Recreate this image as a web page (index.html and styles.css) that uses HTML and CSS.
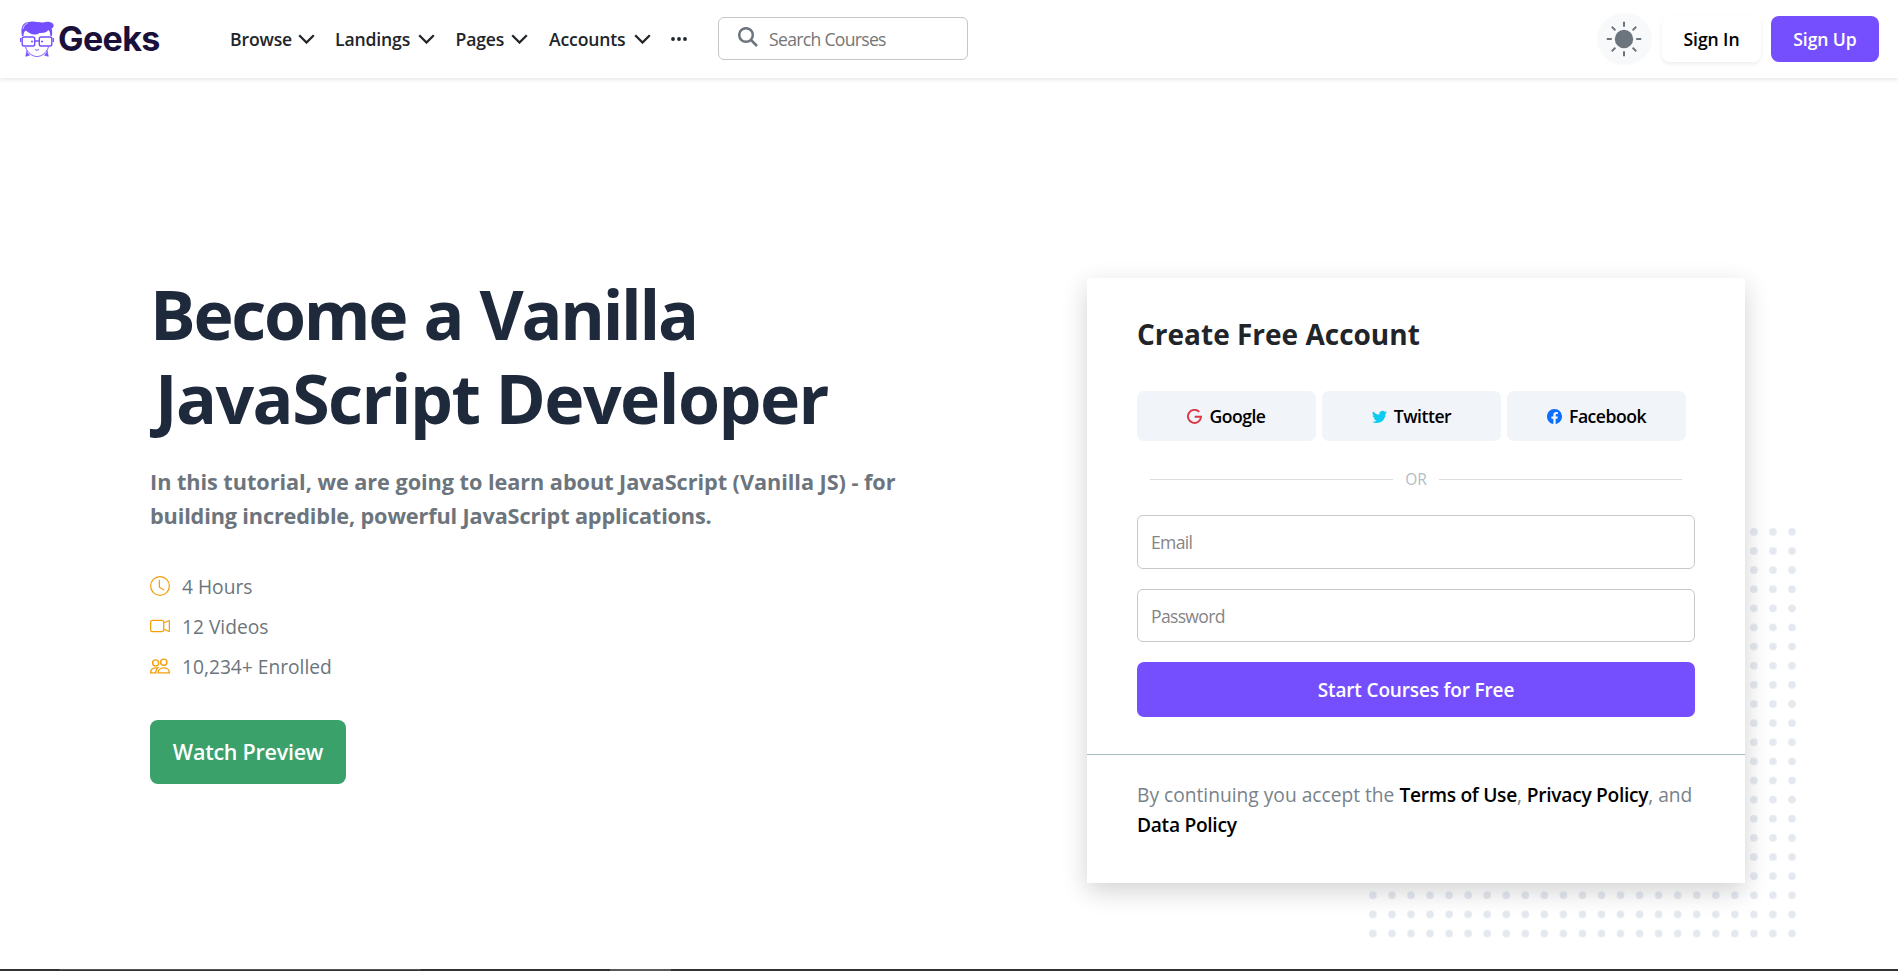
FILE: index.html
```html
<!DOCTYPE html>
<html lang="en">
<head>
<meta charset="utf-8">
<title>Geeks</title>
<link rel="stylesheet" href="styles.css">
</head>
<body>
<header class="navbar">
  <a class="brand">
    <svg class="brand-mark" viewBox="0 0 34 37" fill="none" stroke="#754ffe">
      <path d="M2 15C.5 8 2 1.500 8 1.200c5-1.600 11 .5 15 .2 3-.6 5.500-1 6.500-.4 3 .3 4.500 2 4 4.500-1 2-2 2-2 2 1 2 .8 5 .3 7.500h-1.500c0-3-.5-5-2-6-2 3-6 3-9 3-1 1-3 1.500-5 1.500-3 0-6-2-8.500-4-2 1-2.300 3-2.300 5.500z" fill="#754ffe" stroke="none"/>
      <path d="M3 8c.5-3 2-5 4.500-5.500" stroke="#fff" stroke-width=".7"/>
      <rect x="2.200" y="16" width="12.500" height="9" rx="1.800" stroke-width="1.400"/>
      <rect x="19.300" y="16" width="12.500" height="9" rx="1.800" stroke-width="1.400"/>
      <path d="M14.700 20h4.600M.7 17v4M33.300 17v4M11 20.500h2M21 20.500h2" stroke-width="1.300"/>
      <path d="M5.500 26c2 6 7 9.500 11.500 9.500S26.500 32 28.500 26M15 28.500q2 1.600 4 0" stroke-width=".9"/>
      <path d="M7 29.500v1.800l2.500 3-3.800 1zM27 29.500v1.800l-2.500 3 3.800 1z" fill="#754ffe" stroke-width=".6"/>
    </svg>
    <span class="brand-name">Geeks</span>
  </a>
  <nav class="menu">
    <a class="menu-item browse"><span>Browse</span><svg class="chevron" viewBox="0 0 17 10"><path d="M1.200 1.200 8.500 8.500l7.300-7.300"/></svg></a>
    <a class="menu-item landings"><span>Landings</span><svg class="chevron" viewBox="0 0 17 10"><path d="M1.200 1.200 8.500 8.500l7.300-7.300"/></svg></a>
    <a class="menu-item pages"><span>Pages</span><svg class="chevron" viewBox="0 0 17 10"><path d="M1.200 1.200 8.500 8.500l7.300-7.300"/></svg></a>
    <a class="menu-item accounts"><span>Accounts</span><svg class="chevron" viewBox="0 0 17 10"><path d="M1.200 1.200 8.500 8.500l7.300-7.300"/></svg></a>
    <svg class="more" viewBox="0 0 16 4"><circle cx="2" cy="2" r="1.900"/><circle cx="8" cy="2" r="1.900"/><circle cx="14" cy="2" r="1.900"/></svg>
  </nav>
  <div class="search">
    <svg class="search-icon" viewBox="0 0 20 20"><circle cx="8" cy="8" r="6.800"/><path d="m13 13 6 6"/></svg>
    <span>Search Courses</span>
  </div>
  <div class="actions">
    <span class="theme">
      <svg viewBox="0 0 36 36"><circle cx="18" cy="18" r="8.200"/><path d="M18 .8v5M18 30.200v5M.8 18h5M30.200 18h5M5.800 5.800l3.600 3.600M26.600 26.600l3.600 3.600M5.800 30.200l3.600-3.600M26.600 9.400l3.600-3.600"/></svg>
    </span>
    <a class="btn sign-in"><span>Sign In</span></a>
    <a class="btn sign-up"><span>Sign Up</span></a>
  </div>
</header>
<main class="hero">
  <section class="intro">
    <h1><span class="l1">Become a Vanilla</span><br><span class="l2">JavaScript Developer</span></h1>
    <p class="lead"><span class="p1">In this tutorial, we are going to learn about JavaScript (Vanilla JS) - for</span><br><span class="p2">building incredible, powerful JavaScript applications.</span></p>
    <ul class="facts">
      <li><svg viewBox="0 0 16 16"><path d="M8 3.500a.5.5 0 0 0-1 0V9a.5.5 0 0 0 .252.434l3.500 2a.5.5 0 0 0 .496-.868L8 8.710z"/><path d="M8 16A8 8 0 1 0 8 0a8 8 0 0 0 0 16m7-8A7 7 0 1 1 1 8a7 7 0 0 1 14 0"/></svg><span>4 Hours</span></li>
      <li><svg viewBox="0 0 16 16"><path fill-rule="evenodd" d="M0 5a2 2 0 0 1 2-2h7.500a2 2 0 0 1 1.983 1.738l3.110-1.382A1 1 0 0 1 16 4.269v7.462a1 1 0 0 1-1.406.913l-3.111-1.382A2 2 0 0 1 9.500 13H2a2 2 0 0 1-2-2zm11.500 5.175 3.500 1.556V4.269l-3.500 1.556zM2 4a1 1 0 0 0-1 1v6a1 1 0 0 0 1 1h7.500a1 1 0 0 0 1-1V5a1 1 0 0 0-1-1z"/></svg><span>12 Videos</span></li>
      <li><svg viewBox="0 0 16 16"><g fill="none" stroke="#f59e0b" stroke-width="1.100"><circle cx="11" cy="5" r="2.500"/><circle cx="4.500" cy="5.500" r="2.400"/><path d="M6.500 13.500c0-2 1.500-4 4.500-4s4.500 2 4.500 4zM4.700 13.500H.5c0-2 1.300-4 4.500-4h1.300C5.300 10.500 4.500 12 4.700 13.500z"/></g></svg><span>10,234+ Enrolled</span></li>
    </ul>
    <a class="preview"><span>Watch Preview</span></a>
  </section>
  <section class="signup">
    <svg class="dots" width="427" height="410">
      <defs><pattern id="dot" width="19.050" height="19.130" patternUnits="userSpaceOnUse"><circle cx="3.900" cy="3.900" r="3.800" fill="#e4e9f0"/></pattern></defs>
      <rect width="427" height="410" fill="url(#dot)"/>
    </svg>
    <div class="card">
      <div class="card-body">
        <h2><span>Create Free Account</span></h2>
        <div class="social">
          <a><svg viewBox="0 0 16 16" fill="none" stroke="#dc3545" stroke-width="2"><path d="M13.100 3.100A7 7 0 1 0 15 8.200H8.200"/></svg><span>Google</span></a>
          <a><svg viewBox="0 0 16 16" fill="#0dcaf0"><path d="M5.026 15c6.038 0 9.341-5.003 9.341-9.334 0-.14 0-.282-.006-.422A6.685 6.685 0 0 0 16 3.542a6.658 6.658 0 0 1-1.889.518 3.301 3.301 0 0 0 1.447-1.817 6.533 6.533 0 0 1-2.087.793A3.286 3.286 0 0 0 7.875 6.030a9.325 9.325 0 0 1-6.767-3.429 3.289 3.289 0 0 0 1.018 4.382A3.323 3.323 0 0 1 .64 6.575v.045a3.288 3.288 0 0 0 2.632 3.218 3.203 3.203 0 0 1-.865.115 3.230 3.230 0 0 1-.614-.057 3.283 3.283 0 0 0 3.067 2.277A6.588 6.588 0 0 1 .78 13.580a6.320 6.320 0 0 1-.78-.045A9.344 9.344 0 0 0 5.026 15z"/></svg><span>Twitter</span></a>
          <a><svg viewBox="0 0 16 16" fill="#0d6efd"><path d="M16 8.049c0-4.446-3.582-8.050-8-8.050C3.580 0-.002 3.603-.002 8.050c0 4.017 2.926 7.347 6.750 7.951v-5.625h-2.030V8.050H6.750V6.275c0-2.017 1.195-3.131 3.022-3.131.876 0 1.791.157 1.791.157v1.980h-1.009c-.993 0-1.303.621-1.303 1.258v1.510h2.218l-.354 2.326H9.250V16c3.824-.604 6.750-3.934 6.750-7.951z"/></svg><span>Facebook</span></a>
        </div>
        <div class="or"><span>OR</span></div>
        <div class="field email"><span>Email</span></div>
        <div class="field password"><span>Password</span></div>
        <a class="start"><span>Start Courses for Free</span></a>
      </div>
      <p class="terms"><span>By continuing you accept the </span><b>Terms of Use</b>, <b>Privacy Policy</b><span>, and</span><br><b>Data Policy</b></p>
    </div>
  </section>
</main>
<footer class="edge"><i class="tab"></i><i class="thumb"></i></footer>
</body>
</html>
```
FILE: styles.css
```css
* { box-sizing: border-box; }
body { margin: 0; width: 1898px; height: 971px; overflow: hidden; background: #fff; color: #212529; font-family: "Open Sans", "Noto Sans", sans-serif; font-size: 17.6px; display: flex; flex-direction: column; }
svg { display: block; flex: none; }
span, b { white-space: pre; }
h1, h2, p, ul { margin: 0; padding: 0; }

.navbar { height: 78px; flex: none; display: flex; align-items: center; padding: 0 19px 0 20px; box-shadow: 0 2px 4px rgba(0, 0, 0, .09); }
.brand { display: flex; align-items: center; gap: 4px; width: 210px; }
.brand-mark { width: 34px; height: 37px; }
.brand-name { font: 700 34px/40px Inter, sans-serif; letter-spacing: -.6px; color: #19103b; }
.menu { display: flex; align-items: center; font-weight: 600; letter-spacing: -.150px; width: 488px; }
.menu-item { display: flex; align-items: center; justify-content: space-between; }
.browse { width: 85px; margin-right: 20px; }
.landings { width: 100px; margin-right: 20.500px; }
.pages { width: 72.500px; margin-right: 21px; }
.accounts { width: 102px; margin-right: 20px; }
.chevron { width: 17px; height: 10px; fill: none; stroke: #212529; stroke-width: 2.300; }
.more { width: 16px; height: 4px; fill: #212529; }
.search { width: 250px; height: 43px; margin-top: -1px; border: 1px solid #c4c6c8; border-radius: 6px; display: flex; align-items: center; padding-left: 19px; gap: 11px; color: #757575; letter-spacing: -.7px; }
.search-icon { width: 20px; height: 20px; fill: none; stroke: #6c757d; stroke-width: 2.500; margin-top: -4px; }
.actions { margin-left: auto; display: flex; align-items: center; gap: 10px; font-weight: 600; letter-spacing: -.1px; }
.theme { width: 55px; height: 52px; border-radius: 50%; background: #f8f9fb; display: flex; align-items: center; justify-content: center; }
.theme svg { width: 36px; height: 36px; margin-right: 1px; fill: #6c757d; stroke: #6c757d; stroke-width: 2; }
.btn { height: 46px; border-radius: 8px; display: flex; align-items: center; justify-content: center; }
.sign-in { width: 99px; color: #000; box-shadow: 0 2px 4px rgba(0, 0, 0, .075); }
.sign-up { width: 108px; color: #fff; background: #754ffe; }

.hero { flex: 1; display: flex; padding-left: 150px; }
.intro { width: 937px; padding-top: 194px; }
h1 { font-size: 68px; line-height: 83.500px; font-weight: 700; color: #1e293b; }
.l1 { letter-spacing: -2.300px; word-spacing: 2px; }
.l2 { letter-spacing: -1.550px; padding-left: 5px; }
.lead { margin-top: 26px; font-size: 21.700px; line-height: 34px; font-weight: 700; color: #6c757d; }
.p1 { letter-spacing: -.050px; }
.p2 { letter-spacing: -.150px; }
.facts { list-style: none; margin-top: 33px; font-size: 19.200px; color: #6c757d; }
.facts li { height: 40px; display: flex; align-items: center; gap: 12px; }
.facts svg { width: 20px; height: 20px; fill: #f59e0b; }
.preview { margin-top: 34px; width: 196px; height: 64px; border-radius: 8px; background: #3aa16b; color: #fff; font-size: 21.500px; letter-spacing: -.250px; padding-bottom: 2px; font-weight: 600; display: flex; align-items: center; justify-content: center; }

.signup { position: relative; padding-top: 200px; }
.dots { position: absolute; left: 281.600px; top: 449.900px; }
.card { position: relative; width: 658px; height: 605px; background: #fff; box-shadow: 0 8px 24px rgba(0, 0, 0, .18); }
.card-body { height: 477px; padding: 39px 50px 0; border-bottom: 1px solid #a9b9c1; }
h2 { font-size: 28px; line-height: 34px; font-weight: 700; }
.social { margin-top: 40px; display: flex; gap: 6px; font-weight: 600; letter-spacing: -.500px; color: #000; }
.social a { width: 179px; height: 50px; border-radius: 7px; background: #f1f4f9; display: flex; align-items: center; justify-content: center; gap: 7px; }
.social svg { width: 15px; height: 15px; }
.or { margin: 28px 13px 26px; height: 20px; display: flex; align-items: center; gap: 12px; font-size: 15.500px; color: #b0bec5; }
.or::before, .or::after { content: ""; flex: 1; height: 1px; background: #dadedf; }
.field { height: 54px; margin-bottom: 20px; border: 1px solid #c6c8ca; border-radius: 6px; padding-left: 13px; display: flex; align-items: center; color: #858585; letter-spacing: -.700px; }
.password { height: 53px; }
.start { height: 55px; border-radius: 7px; background: #754ffe; color: #fff; font-size: 19px; letter-spacing: -.150px; font-weight: 600; display: flex; align-items: center; justify-content: center; }
.terms { padding: 25px 50px 0; font-size: 19.200px; line-height: 30px; color: #78828a; }
.terms b { font-weight: 600; color: #000; letter-spacing: -.300px; }

.edge { height: 2px; flex: none; background: #323031; display: flex; }
.tab { margin-left: 60px; width: 360px; border: 1px solid #555; border-bottom: 0; }
.thumb { margin-left: 190px; width: 61px; background: #5b5859; }
```
